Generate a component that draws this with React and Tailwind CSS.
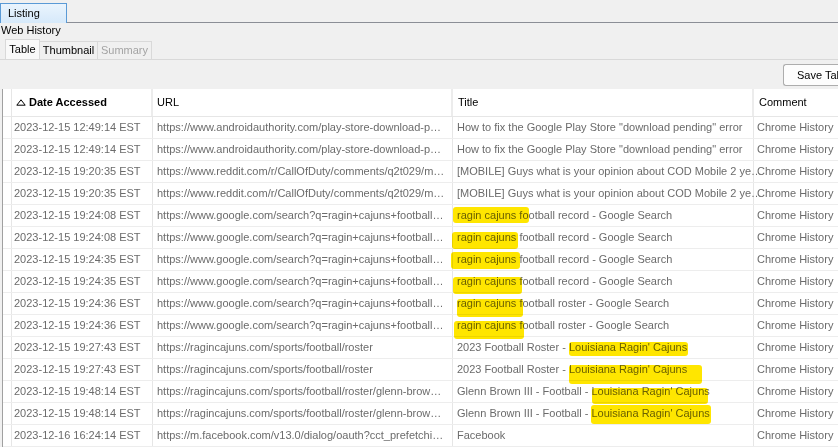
const rows = [
  {
    date: "2023-12-15 12:49:14 EST",
    url: "https://www.androidauthority.com/play-store-download-p…",
    title: ['How to fix the Google Play Store "download pending" error'],
  },
  {
    date: "2023-12-15 12:49:14 EST",
    url: "https://www.androidauthority.com/play-store-download-p…",
    title: ['How to fix the Google Play Store "download pending" error'],
  },
  {
    date: "2023-12-15 19:20:35 EST",
    url: "https://www.reddit.com/r/CallOfDuty/comments/q2t029/m…",
    title: ["[MOBILE] Guys what is your opinion about COD Mobile 2 ye…"],
  },
  {
    date: "2023-12-15 19:20:35 EST",
    url: "https://www.reddit.com/r/CallOfDuty/comments/q2t029/m…",
    title: ["[MOBILE] Guys what is your opinion about COD Mobile 2 ye…"],
  },
  {
    date: "2023-12-15 19:24:08 EST",
    url: "https://www.google.com/search?q=ragin+cajuns+football…",
    title: ["", "ragin cajuns fo", "otball record - Google Search"],
    mark: "left-[-4px] right-[0px] top-[-2px] bottom-[-2px]",
  },
  {
    date: "2023-12-15 19:24:08 EST",
    url: "https://www.google.com/search?q=ragin+cajuns+football…",
    title: ["", "ragin cajuns", " football record - Google Search"],
    mark: "left-[-5px] right-[-2px] top-[1px] bottom-[-6px]",
  },
  {
    date: "2023-12-15 19:24:35 EST",
    url: "https://www.google.com/search?q=ragin+cajuns+football…",
    title: ["", "ragin cajuns", " football record - Google Search"],
    mark: "left-[-6px] right-[-4px] top-[-1px] bottom-[-4px]",
  },
  {
    date: "2023-12-15 19:24:35 EST",
    url: "https://www.google.com/search?q=ragin+cajuns+football…",
    title: ["", "ragin cajuns", " football record - Google Search"],
    mark: "left-[-4px] right-[-6px] top-[2px] bottom-[-7px]",
  },
  {
    date: "2023-12-15 19:24:36 EST",
    url: "https://www.google.com/search?q=ragin+cajuns+football…",
    title: ["", "ragin cajuns", " football roster - Google Search"],
    mark: "left-[0px] right-[-7px] top-[2px] bottom-[-8px]",
  },
  {
    date: "2023-12-15 19:24:36 EST",
    url: "https://www.google.com/search?q=ragin+cajuns+football…",
    title: ["", "ragin cajuns", " football roster - Google Search"],
    mark: "left-[-3px] right-[-8px] top-[2px] bottom-[-8px]",
  },
  {
    date: "2023-12-15 19:27:43 EST",
    url: "https://ragincajuns.com/sports/football/roster",
    title: ["2023 Football Roster - ", "Louisiana Ragin' Cajuns", ""],
    mark: "left-[0px] right-[-1px] top-[1px] bottom-[-3px]",
  },
  {
    date: "2023-12-15 19:27:43 EST",
    url: "https://ragincajuns.com/sports/football/roster",
    title: ["2023 Football Roster - ", "Louisiana Ragin' Cajuns", ""],
    mark: "left-[0px] right-[-15px] top-[2px] bottom-[-9px]",
  },
  {
    date: "2023-12-15 19:48:14 EST",
    url: "https://ragincajuns.com/sports/football/roster/glenn-brow…",
    title: ["Glenn Brown III - Football - ", "Louisiana Ragin' Cajuns", ""],
    mark: "left-[0px] right-[2px] top-[3px] bottom-[-7px]",
  },
  {
    date: "2023-12-15 19:48:14 EST",
    url: "https://ragincajuns.com/sports/football/roster/glenn-brow…",
    title: ["Glenn Brown III - Football - ", "Louisiana Ragin' Cajuns", ""],
    mark: "left-[-1px] right-[-1px] top-[-2px] bottom-[-5px]",
  },
  {
    date: "2023-12-16 16:24:14 EST",
    url: "https://m.facebook.com/v13.0/dialog/oauth?cct_prefetchi…",
    title: ["Facebook"],
  },
];

const Title = ({ row }) => {
  if (row.title.length === 1) return row.title[0];
  const [before, marked, after] = row.title;
  return (
    <>
      {before}
      <span className="relative">
        {marked}
        <span
          className={`absolute rounded-[3px] bg-[#ffe600] mix-blend-multiply ${row.mark}`}
        />
      </span>
      {after}
    </>
  );
};

const App = () => {
  return (
    <div className="w-[838px] h-[447px] overflow-hidden bg-[#f0f0f0] text-[11px] leading-none text-black font-['Liberation_Sans',Arial,sans-serif]">
      {/* Listing tab strip */}
      <div className="h-[23px] flex items-end border-b border-[#8b8e96]">
        <div className="w-[67px] h-[20px] -mb-px flex items-center pl-[7px] border border-b-0 border-[#5a9ad6] bg-gradient-to-b from-[#eaf4fd] to-[#d6e9fa]">
          Listing
        </div>
      </div>

      <div className="h-[14px] flex items-center pl-[1px]">Web History</div>

      {/* Sub tabs */}
      <div className="h-[23px] flex items-end pl-[5px] border-b border-[#d9d9d9]">
        <div className="h-[20px] w-[35px] flex items-center justify-center border border-b-0 border-[#d9d9d9] bg-[#f9f9f9]">
          Table
        </div>
        <div className="h-[18px] w-[58px] flex items-center justify-center border border-l-0 border-b-0 border-[#d9d9d9] bg-[#f0f0f0]">
          Thumbnail
        </div>
        <div className="h-[18px] w-[54px] flex items-center justify-center border border-l-0 border-b-0 border-[#d9d9d9] bg-[#f0f0f0] text-[#a3a3a3]">
          Summary
        </div>
      </div>

      {/* Toolbar */}
      <div className="h-[29px] flex justify-end items-start pt-[4px]">
        <button className="h-[22px] w-[55px] overflow-hidden whitespace-nowrap text-left pl-[13px] border border-[#adadad] rounded-[3px] bg-[#fdfdfd] border-r-0 rounded-r-none">
          Save Table...
        </button>
      </div>

      {/* Table */}
      <div className="ml-[2px] border-l border-[#a0a0a0] bg-white h-full">
        <div className="h-[28px] flex border-b border-[#e6e6e6]">
          <div className="w-[9px] shrink-0 border-r border-[#e6e6e6]" />
          <div className="w-[141px] shrink-0 flex items-center pl-[4px] gap-[3px] font-bold border-r-2 border-[#ececec]">
            <svg width="10" height="7" viewBox="0 0 10 7" className="shrink-0">
              <path d="M5 0.8 L9.2 6.2 L0.8 6.2 Z" fill="none" stroke="#000" strokeWidth="1" />
            </svg>
            Date Accessed
          </div>
          <div className="w-[300px] shrink-0 flex items-center pl-[4px] border-r-2 border-[#ececec]">URL</div>
          <div className="w-[301px] shrink-0 flex items-center pl-[5px] border-r-2 border-[#ececec]">Title</div>
          <div className="flex-1 flex items-center pl-[5px]">Comment</div>
        </div>

        {rows.map((row, i) => (
          <div key={i} className="h-[22px] flex border-b border-[#ededed] text-[#6b6b6b] whitespace-nowrap">
            <div className="w-[9px] shrink-0 border-r border-[#e6e6e6]" />
            <div className="w-[141px] shrink-0 flex items-center pl-[2px] border-r border-[#e6e6e6]">
              {row.date}
            </div>
            <div className="w-[300px] shrink-0 flex items-center pl-[4px] overflow-hidden border-r border-[#e6e6e6]">
              <span className="truncate">{row.url}</span>
            </div>
            <div className="w-[301px] shrink-0 flex items-center pl-[4px] border-r border-[#e6e6e6]">
              <span className="whitespace-nowrap">
                <Title row={row} />
              </span>
            </div>
            <div className="flex-1 flex items-center pl-[3px] overflow-hidden">Chrome History</div>
          </div>
        ))}
      </div>
    </div>
  );
};

export default App;
